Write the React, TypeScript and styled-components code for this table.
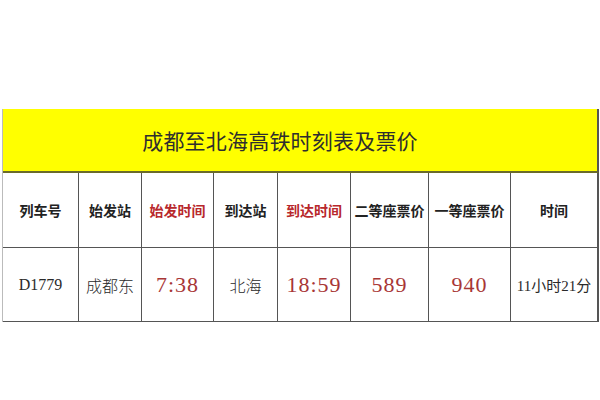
import React from "react";
import styled, { createGlobalStyle } from "styled-components";

const GlobalStyle = createGlobalStyle`
  html, body {
    margin: 0;
    padding: 0;
    background: #fff;
  }
`;

const Page = styled.div`
  width: 600px;
  height: 400px;
  padding: 109px 0 0 2px;
  box-sizing: border-box;
  background: #fff;
`;

const Table = styled.div`
  display: grid;
  grid-template-columns: 76px 63px 72px 64px 73px 78px 82px 88px;
  grid-template-rows: 64px 75px 74px;
  width: 596px;
  border-left: 1px solid #bbb;
`;

const TitleCell = styled.div`
  grid-column: 1 / -1;
  background: #ffff00;
  border-right: 2px solid #555;
  border-bottom: 2px solid #6b6b2a;
  display: flex;
  align-items: center;
  justify-content: center;
  padding-right: 40px;
  font-family: "Noto Sans CJK SC", "Noto Sans", sans-serif;
  font-size: 21px;
  color: #2e2e2e;
  letter-spacing: 0.2px;
`;

const Cell = styled.div<{ $last?: boolean }>`
  display: flex;
  align-items: center;
  justify-content: center;
  border-right: ${(p) => (p.$last ? "2px solid #555" : "1px solid #555")};
  border-bottom: 1px solid #555;
  box-sizing: border-box;
  white-space: nowrap;
`;

const HeadText = styled.span<{ $red?: boolean }>`
  font-family: "Noto Sans CJK SC", "Noto Sans", sans-serif;
  font-weight: 700;
  font-size: 14px;
  color: ${(p) => (p.$red ? "#b8282c" : "#222")};
`;

const DataText = styled.span<{ $kind: "code" | "cjk" | "big" | "dur" }>`
  font-family: ${(p) =>
    p.$kind === "cjk"
      ? '"Noto Sans CJK SC", "Noto Sans", sans-serif'
      : '"Liberation Serif", "Noto Sans CJK SC", serif'};
  font-size: ${(p) =>
    p.$kind === "big" ? "22px" : p.$kind === "cjk" ? "16px" : p.$kind === "dur" ? "15px" : "16px"};
  color: ${(p) => (p.$kind === "big" ? "#a83636" : "#2a2a2a")};
  letter-spacing: ${(p) => (p.$kind === "big" ? "1px" : "0")};
  font-weight: ${(p) => (p.$kind === "cjk" ? 300 : 400)};
`;

const headers: { label: string; red?: boolean }[] = [
  { label: "列车号" },
  { label: "始发站" },
  { label: "始发时间", red: true },
  { label: "到达站" },
  { label: "到达时间", red: true },
  { label: "二等座票价" },
  { label: "一等座票价" },
  { label: "时间" },
];

const row: { text: string; kind: "code" | "cjk" | "big" | "dur" }[] = [
  { text: "D1779", kind: "code" },
  { text: "成都东", kind: "cjk" },
  { text: "7:38", kind: "big" },
  { text: "北海", kind: "cjk" },
  { text: "18:59", kind: "big" },
  { text: "589", kind: "big" },
  { text: "940", kind: "big" },
  { text: "11小时21分", kind: "dur" },
];

export default function App() {
  return (
    <Page>
      <GlobalStyle />
      <Table>
        <TitleCell>成都至北海高铁时刻表及票价</TitleCell>
        {headers.map((h, i) => (
          <Cell key={h.label} $last={i === headers.length - 1}>
            <HeadText $red={h.red}>{h.label}</HeadText>
          </Cell>
        ))}
        {row.map((d, i) => (
          <Cell key={d.text} $last={i === row.length - 1}>
            <DataText $kind={d.kind}>{d.text}</DataText>
          </Cell>
        ))}
      </Table>
    </Page>
  );
}
